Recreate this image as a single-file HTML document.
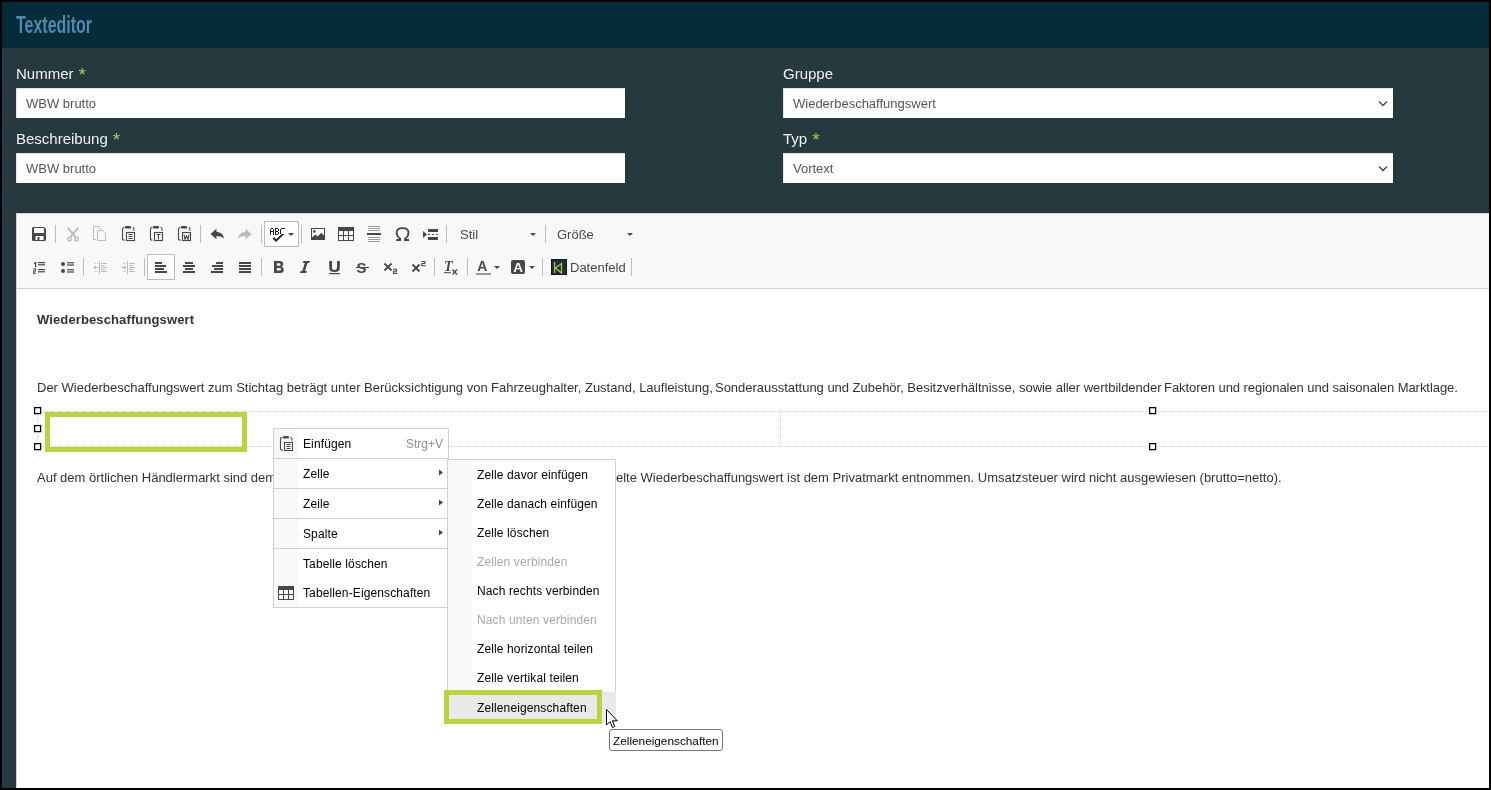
<!DOCTYPE html>
<html><head><meta charset="utf-8">
<style>
*{box-sizing:border-box}
html,body{margin:0;padding:0}
body{will-change:transform;width:1491px;height:790px;background:#000;position:relative;overflow:hidden;font-family:"Liberation Sans",sans-serif}
.abs{position:absolute}
#hdr{left:2px;top:2px;width:1487px;height:46px;background:#032b38}
#title{left:16px;top:12px;font-size:23px;font-weight:bold;color:#4f8aad;transform:scaleX(0.695);transform-origin:0 0;white-space:nowrap;letter-spacing:0}
#form{left:2px;top:48px;width:1487px;height:740px;background:#25393e}
.lbl{position:absolute;font-size:15px;margin-top:1px;color:#eef2f3;white-space:nowrap}
.lbl b{color:#b3c75a;font-weight:normal;font-size:19px;position:absolute;left:100%;margin-left:5px;top:-1px}
.inp{position:absolute;height:30px;background:#fff;box-shadow:inset 1px 1px 1px rgba(0,0,0,0.12);font-size:13px;color:#555;padding-left:10px;line-height:32px;white-space:nowrap}
.chev{position:absolute;right:5px;top:13px}
#editor{left:16px;top:213px;width:1473px;height:575px;background:#fff;border-left:1px solid #d1d1d1}
#tb{left:16px;top:213px;width:1473px;height:76px;background:#f8f8f8;border-top:1px solid #d1d1d1;border-left:1px solid #d1d1d1;border-bottom:1px solid #d1d1d1}
.ic{position:absolute;width:16px;height:16px}
.sep{position:absolute;width:1px;height:18px;background:#bcbcbc}
.mi{position:absolute;white-space:nowrap;font-size:12px;color:#000;letter-spacing:0.12px}
.txt{position:absolute;white-space:nowrap;font-size:13px;color:#333}
</style></head><body>
<div id="hdr" class="abs"></div>
<div id="title" class="abs">Texteditor</div>
<div id="form" class="abs"></div>
<div class="lbl" style="left:16px;top:64px">Nummer<b>*</b></div>
<div class="inp" style="left:16px;top:88px;width:609px">WBW brutto</div>
<div class="lbl" style="left:16px;top:129px">Beschreibung<b>*</b></div>
<div class="inp" style="left:16px;top:153px;width:609px">WBW brutto</div>
<div class="lbl" style="left:783px;top:64px">Gruppe</div>
<div class="inp" style="left:783px;top:88px;width:610px">Wiederbeschaffungswert<svg class="chev" width="10" height="6" viewBox="0 0 10 6"><path d="M1 0.5 L5 4.5 L9 0.5" fill="none" stroke="#444" stroke-width="1.3"/></svg></div>
<div class="lbl" style="left:783px;top:129px">Typ<b>*</b></div>
<div class="inp" style="left:783px;top:153px;width:610px">Vortext<svg class="chev" width="10" height="6" viewBox="0 0 10 6"><path d="M1 0.5 L5 4.5 L9 0.5" fill="none" stroke="#444" stroke-width="1.3"/></svg></div>

<div id="editor" class="abs"></div>
<div id="tb" class="abs"></div>

<svg class="abs" style="left:0;top:0" width="1491" height="790" viewBox="0 0 1491 790">
<g fill="#474747" stroke="none">
<!-- save -->
<path d="M33.5 227h10.5l2 2v10.5a1.5 1.5 0 0 1 -1.5 1.5h-11a1.5 1.5 0 0 1 -1.5 -1.5v-11a1.5 1.5 0 0 1 1.5 -1.5z"/>
<rect x="34" y="228" width="10" height="5" fill="#fff"/>
<path d="M35.5 236h8v4h-8z M37.5 237v3h2v-3z" fill="#fff" fill-rule="evenodd"/>
</g>
<!-- separators row1 -->
<g fill="#bcbcbc">
<rect x="55" y="225" width="1" height="18"/>
<rect x="200" y="225" width="1" height="18"/>
<rect x="261" y="225" width="1" height="18"/>
<rect x="301" y="225" width="1" height="18"/>
<rect x="446" y="225" width="1" height="18"/>
<rect x="545" y="225" width="1" height="18"/>
<!-- row2 -->
<rect x="83" y="258" width="1" height="18"/>
<rect x="144" y="258" width="1" height="18"/>
<rect x="261" y="258" width="1" height="18"/>
<rect x="434" y="258" width="1" height="18"/>
<rect x="467" y="258" width="1" height="18"/>
<rect x="542" y="258" width="1" height="18"/>
<rect x="631" y="258" width="1" height="18"/>
</g>
<!-- cut (disabled) -->
<g fill="none" stroke="#bcbcbc" stroke-width="1.4">
<path d="M67.6 227.6 L75.5 236.8 M78.4 227.6 L70.5 236.8" stroke-width="1.9"/>
<circle cx="69.5" cy="239" r="1.8"/><circle cx="76.5" cy="239" r="1.8"/>
</g>
<!-- copy (disabled) -->
<g fill="none" stroke="#bcbcbc" stroke-width="1">
<path d="M96.5 239.5h-3v-13h5l2.5 3"/>
<path d="M97.5 230.5h5.5l2.5 3v7h-8z"/>
</g>
<!-- paste x3 -->
<g fill="none" stroke="#474747" stroke-width="1.1">
<path d="M124.5 227.2 q-2 0 -2 2 v9 q0 2 2 2"/><path d="M132.5 227.2 q1.5 0 1.5 2 v1.5"/>
<path d="M152.5 227.2 q-2 0 -2 2 v9 q0 2 2 2"/><path d="M160.5 227.2 q1.5 0 1.5 2 v1.5"/>
<path d="M180.5 227.2 q-2 0 -2 2 v9 q0 2 2 2"/><path d="M188.5 227.2 q1.5 0 1.5 2 v1.5"/>
<rect x="126.5" y="232.5" width="8" height="8"/>
<rect x="154.5" y="232.5" width="8" height="8"/>
<rect x="182.5" y="232.5" width="8" height="8"/>
<path d="M128.5 234.5h4 M128.5 236.5h4 M128.5 238.5h4"/>
<path d="M156.5 234.5h4 M158.5 234.5v5"/>
<path d="M184 234.5l1 5l1.5 -3.5l1.5 3.5l1 -5"/>
</g>
<g fill="#474747">
<rect x="125" y="226" width="6" height="2.5" rx="1"/>
<rect x="153" y="226" width="6" height="2.5" rx="1"/>
<rect x="181" y="226" width="6" height="2.5" rx="1"/>
<!-- undo -->
<path d="M210.5 234 L216.5 228.7 V232 C220.5 232 223.5 234.5 224.2 239 C222.5 236.8 219.8 236 216.5 236 V239.2 Z"/>
</g>
<!-- redo disabled -->
<path fill="#bcbcbc" d="M251.5 234 L245.5 228.7 V232 C241.5 232 238.5 234.5 237.8 239 C239.5 236.8 242.2 236 245.5 236 V239.2 Z"/>
<!-- spellcheck button -->
<rect x="264.5" y="221.5" width="34" height="25" fill="#fff" stroke="#bcbcbc" stroke-width="1"/>
<path fill="#222" d="M271 228h1v1h-1z M272 228h1v1h-1z M270 229h1v1h-1z M273 229h1v1h-1z M270 230h1v1h-1z M273 230h1v1h-1z M270 231h1v1h-1z M271 231h1v1h-1z M272 231h1v1h-1z M273 231h1v1h-1z M270 232h1v1h-1z M273 232h1v1h-1z M270 233h1v1h-1z M273 233h1v1h-1z M270 234h1v1h-1z M273 234h1v1h-1z M275 228h1v1h-1z M276 228h1v1h-1z M277 228h1v1h-1z M275 229h1v1h-1z M278 229h1v1h-1z M275 230h1v1h-1z M278 230h1v1h-1z M275 231h1v1h-1z M276 231h1v1h-1z M277 231h1v1h-1z M275 232h1v1h-1z M278 232h1v1h-1z M275 233h1v1h-1z M278 233h1v1h-1z M275 234h1v1h-1z M276 234h1v1h-1z M277 234h1v1h-1z M281 228h1v1h-1z M282 228h1v1h-1z M283 228h1v1h-1z M284 228h1v1h-1z M280 229h1v1h-1z M280 230h1v1h-1z M280 231h1v1h-1z M280 232h1v1h-1z M280 233h1v1h-1z M281 234h1v1h-1z M282 234h1v1h-1z M283 234h1v1h-1z"/>
<path d="M273.3 237.8 l2.8 2.8 l6.5 -6.2" fill="none" stroke="#222" stroke-width="2"/>
<path d="M288 233h6l-3 3z" fill="#474747"/>
<!-- image -->
<g fill="#474747">
<path fill-rule="evenodd" d="M311 228h14v12h-14z M312 229v10h12v-10z"/>
<circle cx="314.3" cy="231.4" r="1.3"/>
<path d="M312 239 L312 237.5 L315.5 234.5 L317.5 236.5 L321.5 232.8 L324 235.8 V239z"/>
<!-- table -->
<path fill-rule="evenodd" d="M338 227h16v14h-16z M339 231h4v4h-4z M344 231h4v4h-4z M349 231h4v4h-4z M339 236h4v4h-4z M344 236h4v4h-4z M349 236h4v4h-4z"/>
<!-- hr -->
<rect x="367" y="233" width="14" height="2"/>
</g>
<g fill="#9a9a9a">
<rect x="368" y="226" width="12" height="1"/><rect x="368" y="228" width="12" height="1"/><rect x="368" y="230" width="12" height="1"/>
<rect x="368" y="237" width="12" height="1"/><rect x="368" y="239" width="12" height="1"/><rect x="368" y="241" width="12" height="1"/>
</g>
<!-- omega -->
<path fill="none" stroke="#474747" stroke-width="1.8" d="M396.2 240 h4 v-1.2 C397.5 237 396.7 235 396.7 232.8 C396.7 229.8 399 228.2 402.6 228.2 C406.2 228.2 408.5 229.8 408.5 232.8 C408.5 235 407.7 237 405 238.8 V240 h4"/>
<!-- block icon -->
<g fill="#474747">
<path d="M423 231l4 3.5l-4 3.5z"/>
<rect x="428" y="229" width="10" height="3"/>
<rect x="428" y="237" width="10" height="3"/>
<rect x="428" y="234" width="2" height="1"/><rect x="432" y="234" width="2" height="1"/><rect x="436" y="234" width="2" height="1"/>
<!-- combo arrows -->
<path d="M530 233h6l-3 3z"/>
<path d="M627 233h6l-3 3z"/>
</g>

<!-- ROW 2 -->
<g fill="#474747">
<!-- numbered -->
<path d="M33.8 262.5h1.2v-0.6h1.2v5.2h-1.2v-3.4h-1.2z"/>
<path d="M33 268.5h3v3h-1.8v1.3h1.8v1h-3v-3h1.8v-1.3h-1.8z"/>
<rect x="38" y="262" width="7" height="1.2"/><rect x="38" y="264.2" width="7" height="1.2"/>
<rect x="38" y="269" width="7" height="1.2"/><rect x="38" y="271.2" width="7" height="1.2"/>
<!-- bullets -->
<circle cx="63" cy="264" r="2"/><circle cx="63" cy="271" r="2"/>
<rect x="67" y="262.2" width="7" height="1.2"/><rect x="67" y="264.4" width="7" height="1.2"/>
<rect x="67" y="269.2" width="7" height="1.2"/><rect x="67" y="271.4" width="7" height="1.2"/>
</g>
<g fill="#bcbcbc">
<!-- outdent -->
<rect x="99" y="261" width="1" height="13"/>
<rect x="101" y="263" width="6" height="1"/><rect x="101" y="265" width="4" height="1"/><rect x="101" y="267" width="6" height="1"/><rect x="101" y="269" width="4" height="1"/><rect x="101" y="271" width="6" height="1"/>
<rect x="95" y="263" width="1" height="1"/><rect x="97" y="263" width="1" height="1"/><rect x="95" y="271" width="1" height="1"/><rect x="97" y="271" width="1" height="1"/>
<path d="M93 267.5l2.5 -2.5v2h3v1h-3v2z"/>
<!-- indent -->
<rect x="127" y="261" width="1" height="13"/>
<rect x="129" y="263" width="6" height="1"/><rect x="129" y="265" width="4" height="1"/><rect x="129" y="267" width="6" height="1"/><rect x="129" y="269" width="4" height="1"/><rect x="129" y="271" width="6" height="1"/>
<rect x="123" y="263" width="1" height="1"/><rect x="125" y="263" width="1" height="1"/><rect x="123" y="271" width="1" height="1"/><rect x="125" y="271" width="1" height="1"/>
<path d="M126.5 267.5l-2.5 -2.5v2h-3v1h3v2z"/>
</g>
<!-- active align left button -->
<rect x="147.5" y="254.5" width="27" height="25" fill="#fff" stroke="#bcbcbc"/>
<g fill="#474747">
<rect x="155" y="262" width="7" height="2"/><rect x="155" y="265" width="11" height="2"/><rect x="155" y="268" width="9" height="2"/><rect x="155" y="271" width="12" height="2"/>
<rect x="185" y="262" width="8" height="2"/><rect x="183" y="265" width="12" height="2"/><rect x="185" y="268" width="8" height="2"/><rect x="183" y="271" width="12" height="2"/>
<rect x="216" y="262" width="7" height="2"/><rect x="212" y="265" width="11" height="2"/><rect x="214" y="268" width="9" height="2"/><rect x="211" y="271" width="12" height="2"/>
<rect x="239" y="262" width="12" height="2"/><rect x="239" y="265" width="12" height="2"/><rect x="239" y="268" width="12" height="2"/><rect x="239" y="271" width="12" height="2"/>
</g>
<!-- B I U S -->
<g fill="#474747" font-family="Liberation Sans">
<path fill-rule="evenodd" d="M274 261h5.6q3.6 0 3.6 3q0 2 -1.7 2.7q2.3 0.6 2.3 3.1q0 3.2 -3.6 3.2h-6.2z M276.8 263.3v2.5h2.5q1.3 0 1.3 -1.25q0 -1.25 -1.3 -1.25z M276.8 268v2.6h2.8q1.5 0 1.5 -1.3q0 -1.3 -1.5 -1.3z"/>
<path d="M303.5 261h6.3l-0.5 2h-1.8l-2.5 8h1.8l-0.5 2h-6.3l0.5 -2h1.8l2.5 -8h-1.8z"/>
<path d="M329.2 261h2.8v6.8q0 2.2 2.5 2.2q2.5 0 2.5 -2.2v-6.8h2.8v6.8q0 4.3 -5.3 4.3q-5.3 0 -5.3 -4.3z"/>
<rect x="329" y="273" width="11" height="1.2"/>
<text x="356.5" y="273" font-size="15" font-weight="bold">S</text>
<rect x="356" y="267" width="13" height="1"/>
</g>
<g stroke="#474747" stroke-width="1.9" fill="none">
<path d="M384.5 263.5l7 7 M391.5 263.5l-7 7"/>
<path d="M412.5 264.5l7 7 M419.5 264.5l-7 7"/>
</g>
<g fill="none" stroke="#474747" stroke-width="1.1">
<path d="M393 269.2h3.5v2h-3v2.2h3.8"/>
<path d="M421.3 261.5h3.5v2h-3v2.2h3.8"/>
</g>
<!-- Tx -->
<g fill="#474747">
<text x="444" y="271" font-size="14" font-weight="bold" font-style="italic" font-family="Liberation Serif">T</text>
<rect x="444" y="272.2" width="7" height="1"/>
</g>
<path d="M452.5 269.5l4.5 5 M457 269.5l-4.5 5" stroke="#474747" stroke-width="1.3"/>
<!-- text color -->
<text x="477.3" y="271" font-size="14" font-weight="bold" fill="#474747" font-family="Liberation Sans">A</text>
<rect x="476" y="273" width="15" height="2" fill="#999"/>
<path d="M494 266h6l-3 3z" fill="#474747"/>
<!-- bg color -->
<rect x="511" y="260" width="14" height="14" rx="2" fill="#474747"/>
<text x="513.2" y="272" font-size="13.5" font-weight="bold" fill="#fff" font-family="Liberation Sans">A</text>
<path d="M529 266h6l-3 3z" fill="#474747"/>
<!-- datenfeld icon -->
<rect x="551" y="259" width="16" height="16" fill="#1e3035"/>
<rect x="551.5" y="259.5" width="15" height="15" fill="none" stroke="#0e1b1e"/><path d="M554.6 262v11 M555.5 268L561.5 263.5V273z" fill="none" stroke="#a9c34e" stroke-width="1.3"/>
</svg>
<div class="txt" style="left:460px;top:227px;color:#484848">Stil</div>
<div class="txt" style="left:557px;top:227px;color:#484848">Größe</div>
<div class="txt" style="left:570px;top:260px;color:#484848">Datenfeld</div>



<div class="txt" style="left:37px;top:312px;font-weight:bold;letter-spacing:0.12px">Wiederbeschaffungswert</div>
<div class="txt" style="left:37px;top:380px">Der Wiederbeschaffungswert zum Stichtag beträgt unter Berücksichtigung von </div>
<div class="txt" style="left:491px;top:380px">Fahrzeughalter, Zustand, Laufleistung, </div>
<div class="txt" style="left:715px;top:380px;letter-spacing:-0.02px">Sonderausstattung und Zubehör, Besitzverhältnisse, sowie aller wertbildender </div>
<div class="txt" style="left:1164px;top:380px;letter-spacing:-0.05px">Faktoren und regionalen und saisonalen Marktlage.</div>
<svg class="abs" style="left:0;top:0" width="1491" height="790" viewBox="0 0 1491 790">
<g stroke="#d3d3d3" stroke-width="1" stroke-dasharray="1 1" fill="none">
<path d="M37 411.5H1489 M37 446.5H1489 M37.5 411V447 M780.5 411V447"/>
</g>
<g fill="#fff" stroke="#000" stroke-width="1.3">
<rect x="34.6" y="407.6" width="6" height="6"/>
<rect x="34.6" y="425.6" width="6" height="6"/>
<rect x="34.6" y="443.6" width="6" height="6"/>
<rect x="1149.6" y="407.6" width="6" height="6"/>
<rect x="1149.6" y="443.6" width="6" height="6"/>
</g>
<rect x="47.5" y="414.5" width="197" height="35" fill="none" stroke="#bdd141" stroke-width="5"/>
</svg>
<div class="txt" style="left:37px;top:470px">Auf dem örtlichen Händlermarkt sind dem</div>
<div class="txt" style="left:616px;top:470px">elte Wiederbeschaffungswert ist dem Privatmarkt entnommen. Umsatzsteuer wird nicht ausgewiesen (brutto=netto).</div>



<div class="abs" style="left:273px;top:428px;width:176px;height:180px;background:#fff;border:1px solid #d1d1d1"></div>
<div class="abs" style="left:274px;top:429px;width:24px;height:178px;background:#f8f8f8"></div>
<div class="abs" style="left:274px;top:458px;width:174px;height:1px;background:#d1d1d1"></div>
<div class="abs" style="left:274px;top:488px;width:174px;height:1px;background:#d1d1d1"></div>
<div class="abs" style="left:274px;top:518px;width:174px;height:1px;background:#d1d1d1"></div>
<div class="abs" style="left:274px;top:548px;width:174px;height:1px;background:#d1d1d1"></div>
<div class="mi" style="left:303px;top:437px">Einfügen</div>
<div class="mi" style="left:406px;top:437px;color:#8f8f8f;letter-spacing:0">Strg+V</div>
<div class="mi" style="left:303px;top:467px">Zelle</div>
<div class="mi" style="left:303px;top:497px">Zeile</div>
<div class="mi" style="left:303px;top:527px">Spalte</div>
<div class="mi" style="left:303px;top:557px">Tabelle löschen</div>
<div class="mi" style="left:303px;top:586px">Tabellen-Eigenschaften</div>
<svg class="abs" style="left:0;top:0" width="1491" height="790" viewBox="0 0 1491 790">
<g fill="#474747">
<path d="M439 469.5v6l4 -3z"/><path d="M439 499.5v6l4 -3z"/><path d="M439 529.5v6l4 -3z"/>
</g>
<g fill="none" stroke="#474747" stroke-width="1.1">
<path d="M282.5 437.2 q-2 0 -2 2 v9 q0 2 2 2"/><path d="M290.5 437.2 q1.5 0 1.5 2 v1.5"/>
<rect x="284.5" y="442.5" width="8" height="8"/>
<path d="M286.5 444.5h4 M286.5 446.5h4 M286.5 448.5h4"/>
</g>
<rect x="283" y="436" width="6" height="2.5" rx="1" fill="#474747"/>
<path fill="#474747" fill-rule="evenodd" d="M278 586h16v14h-16z M279 590h4v4h-4z M284 590h4v4h-4z M289 590h4v4h-4z M279 595h4v4h-4z M284 595h4v4h-4z M289 595h4v4h-4z"/>
</svg>
<div class="abs" style="left:447px;top:459px;width:169px;height:264px;background:#fff;border:1px solid #d1d1d1;border-bottom:none"></div>
<div class="abs" style="left:448px;top:460px;width:24px;height:232px;background:#f8f8f8"></div>
<div class="abs" style="left:448px;top:692px;width:168px;height:31px;background:#e9e9e9"></div>
<div class="mi" style="left:477px;top:468px">Zelle davor einfügen</div>
<div class="mi" style="left:477px;top:497px">Zelle danach einfügen</div>
<div class="mi" style="left:477px;top:526px">Zelle löschen</div>
<div class="mi" style="left:477px;top:555px;color:#a9a9a9">Zellen verbinden</div>
<div class="mi" style="left:477px;top:584px">Nach rechts verbinden</div>
<div class="mi" style="left:477px;top:613px;color:#a9a9a9">Nach unten verbinden</div>
<div class="mi" style="left:477px;top:642px">Zelle horizontal teilen</div>
<div class="mi" style="left:477px;top:671px">Zelle vertikal teilen</div>
<div class="mi" style="left:477px;top:701px">Zelleneigenschaften</div>
<div class="abs" style="left:444px;top:690px;width:158px;height:34px;border:5px solid #bdd141"></div>
<svg class="abs" style="left:0;top:0" width="1491" height="790" viewBox="0 0 1491 790">
<path d="M606.5 709.5 V725 L610 721.5 L612.5 727.5 L614.8 726.5 L612.3 720.8 H617.3 Z" fill="#fff" stroke="#000" stroke-width="1"/>
</svg>
<div class="abs" style="left:609px;top:729px;width:114px;height:22px;background:#fff;border:1px solid #767676;border-radius:3px"></div>
<div class="mi" style="left:613px;top:734px;font-size:11.8px;color:#000;letter-spacing:0">Zelleneigenschaften</div>


</body></html>
